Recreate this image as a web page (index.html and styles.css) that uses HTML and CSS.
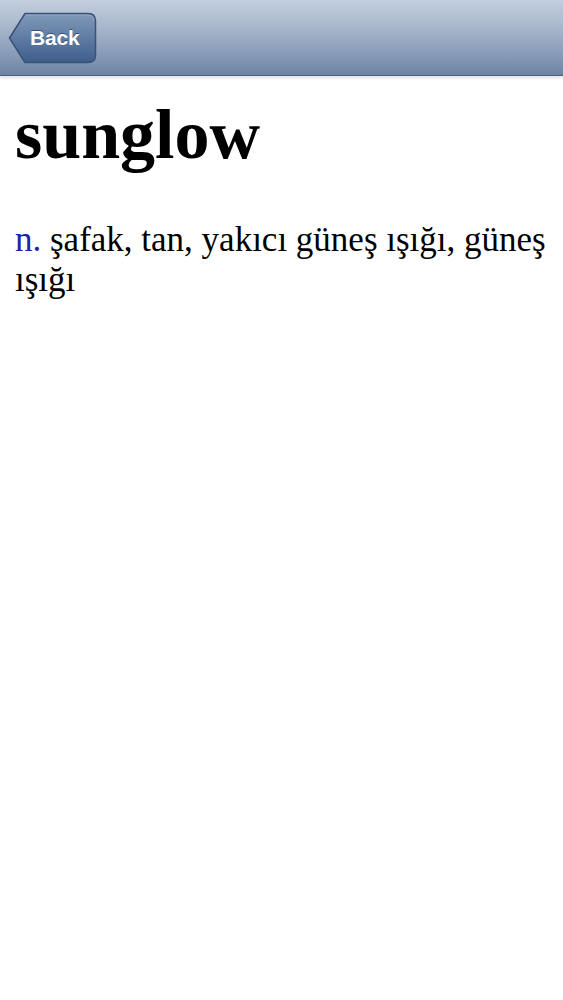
FILE: index.html
```html
<!DOCTYPE html>
<html>
<head>
<meta charset="utf-8">
<link rel="stylesheet" href="styles.css">
</head>
<body>
<header class="navbar">
  <a class="back">
    <svg class="back-shape" width="89" height="52" viewBox="0 0 89 52">
      <defs>
        <linearGradient id="bg" x1="0" y1="0" x2="0" y2="1">
          <stop offset="0" stop-color="#8299b8"/>
          <stop offset="0.5" stop-color="#5e7ca3"/>
          <stop offset="1" stop-color="#3e5d8b"/>
        </linearGradient>
      </defs>
      <path d="M17 1.5 H80 Q87.5 1.5 87.5 9 V43 Q87.5 50.5 80 50.5 H17 L1.5 26 Z" fill="url(#bg)" stroke="#3a5279" stroke-width="1.5" stroke-linejoin="round"/>
      <path d="M18 3 H80 Q86 3 86 9" fill="none" stroke="rgba(255,255,255,0.18)" stroke-width="1"/>
    </svg>
    <span class="back-label">Back</span>
  </a>
</header>
<main class="content">
  <h1 class="word">sunglow</h1>
  <p class="def"><span class="pos">n.</span> şafak, tan, yakıcı güneş ışığı, güneş ışığı</p>
</main>
</body>
</html>
```
FILE: styles.css
```css
html, body {
  margin: 0;
  padding: 0;
  background: #ffffff;
}
.navbar {
  height: 75px;
  background: linear-gradient(to bottom, #c3cedd 0%, #a9b8cc 35%, #8a9db8 70%, #6d84a4 100%);
  border-bottom: 1px solid #4d6282;
  box-shadow: 0 2px 3px rgba(0, 0, 0, 0.12);
  display: flex;
  align-items: flex-start;
  padding: 12px 0 0 8px;
  box-sizing: border-box;
  height: 76px;
}
.back {
  position: relative;
  width: 89px;
  height: 52px;
  display: flex;
  align-items: center;
  padding-left: 22px;
  box-sizing: border-box;
}
.back-shape {
  position: absolute;
  left: 0;
  top: 0;
}
.back-label {
  position: relative;
  font-family: "Liberation Sans", Arial, sans-serif;
  font-weight: bold;
  font-size: 21px;
  color: #ffffff;
  text-shadow: 0 -1px 0 rgba(30, 45, 75, 0.6);
  letter-spacing: -0.2px;
}
.content {
  padding: 0 10px 0 15px;
}
.word {
  margin: 20px 0 0 0;
  font-family: "Liberation Serif", "Times New Roman", serif;
  font-weight: bold;
  font-size: 70px;
  line-height: 77px;
  color: #000000;
}
.def {
  margin: 47px 0 0 0;
  font-family: "Liberation Serif", "Times New Roman", serif;
  font-size: 35px;
  line-height: 40px;
  color: #000000;
}
.pos {
  color: #2222aa;
}
```
